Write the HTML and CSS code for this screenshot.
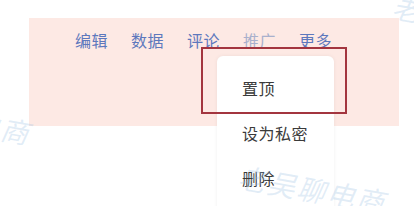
FILE: index.html
```html
<!DOCTYPE html>
<html lang="zh">
<head>
<meta charset="utf-8">
<link rel="stylesheet" href="styles.css">
</head>
<body>
<div class="stage">
  <div class="band">
    <nav class="actions">
      <a class="act">编辑</a>
      <a class="act">数据</a>
      <a class="act">评论</a>
      <a class="act dim">推广</a>
      <a class="act">更多</a>
    </nav>
  </div>
  <ul class="menu">
    <li class="item">置顶</li>
    <li class="item">设为私密</li>
    <li class="item">删除</li>
  </ul>
  <div class="mark"></div>
  <div class="wm wm-left">吴聊电商</div>
  <div class="wm wm-right">老吴聊电商</div>
  <div class="wm wm-top">老吴</div>
</div>
</body>
</html>
```

FILE: styles.css
```css
html, body {
  margin: 0;
  padding: 0;
  background: #ffffff;
}
.stage {
  position: relative;
  width: 414px;
  height: 206px;
  overflow: hidden;
  font-family: "Noto Sans CJK SC", "Noto Sans", sans-serif;
}
.band {
  margin: 18px 15px 0 29px;
  height: 108px;
  background: #fde9e4;
  display: flex;
  justify-content: flex-end;
  padding: 12px 67px 0 0;
  box-sizing: border-box;
}
.actions {
  display: flex;
  gap: 23px;
  height: 20px;
}
.act {
  font-size: 16px;
  line-height: 20px;
  color: #5d78bd;
  letter-spacing: 0.5px;
}
.act.dim {
  color: #a9b0cc;
}
.menu {
  position: absolute;
  left: 217px;
  top: 56px;
  width: 117px;
  height: 160px;
  margin: 0;
  padding: 20px 0 0 0;
  box-sizing: border-box;
  list-style: none;
  background: #ffffff;
  border-radius: 6px;
  box-shadow: 0 0 4px rgba(0, 0, 0, 0.06);
}
.item {
  padding-left: 25px;
  height: 45px;
  line-height: 24px;
  font-size: 16px;
  color: #3a3a3a;
  letter-spacing: 0.5px;
}
.mark {
  position: absolute;
  left: 201px;
  top: 47px;
  width: 146px;
  height: 67px;
  border: 2.5px solid #a3353f;
  box-sizing: border-box;
}
.wm {
  position: absolute;
  font-size: 28px;
  color: rgba(150, 190, 225, 0.28);
  font-style: italic;
  white-space: nowrap;
  transform: rotate(10deg);
  transform-origin: left top;
  letter-spacing: 2px;
}
.wm-left {
  left: -84px;
  top: 92px;
}
.wm-right {
  left: 242px;
  top: 156px;
}
.wm-top {
  left: 396px;
  top: -14px;
}
```
